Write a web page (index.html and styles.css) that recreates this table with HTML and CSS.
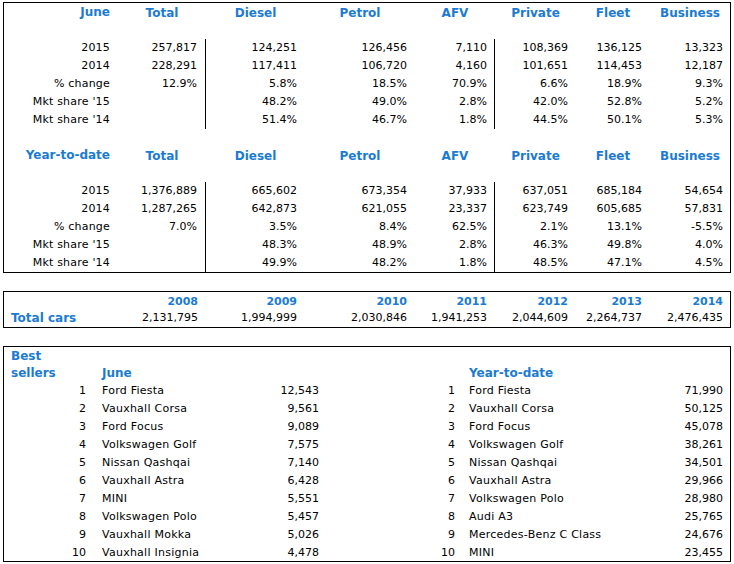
FILE: index.html
```html
<!DOCTYPE html>
<html lang="en">
<head>
<meta charset="utf-8">
<title>New car registrations</title>
<link rel="stylesheet" href="styles.css">
</head>
<body>
<section class="box sales">
  <div class="r hd"><span class="lab">June</span><span>Total</span><span>Diesel</span><span>Petrol</span><span>AFV</span><span>Private</span><span>Fleet</span><span>Business</span></div>
  <div class="r gap"></div>
  <div class="r"><span class="lab">2015</span><span class="sep">257,817</span><span>124,251</span><span>126,456</span><span class="sep s5">7,110</span><span>108,369</span><span>136,125</span><span>13,323</span></div>
  <div class="r"><span class="lab">2014</span><span class="sep">228,291</span><span>117,411</span><span>106,720</span><span class="sep s5">4,160</span><span>101,651</span><span>114,453</span><span>12,187</span></div>
  <div class="r"><span class="lab">% change</span><span class="sep">12.9%</span><span>5.8%</span><span>18.5%</span><span class="sep s5">70.9%</span><span>6.6%</span><span>18.9%</span><span>9.3%</span></div>
  <div class="r"><span class="lab">Mkt share '15</span><span class="sep"></span><span>48.2%</span><span>49.0%</span><span class="sep s5">2.8%</span><span>42.0%</span><span>52.8%</span><span>5.2%</span></div>
  <div class="r"><span class="lab">Mkt share '14</span><span class="sep"></span><span>51.4%</span><span>46.7%</span><span class="sep s5">1.8%</span><span>44.5%</span><span>50.1%</span><span>5.3%</span></div>
  <div class="r spacer"></div>
  <div class="r hd"><span class="lab">Year-to-date</span><span>Total</span><span>Diesel</span><span>Petrol</span><span>AFV</span><span>Private</span><span>Fleet</span><span>Business</span></div>
  <div class="r gap"></div>
  <div class="r"><span class="lab">2015</span><span class="sep">1,376,889</span><span>665,602</span><span>673,354</span><span class="sep s5">37,933</span><span>637,051</span><span>685,184</span><span>54,654</span></div>
  <div class="r"><span class="lab">2014</span><span class="sep">1,287,265</span><span>642,873</span><span>621,055</span><span class="sep s5">23,337</span><span>623,749</span><span>605,685</span><span>57,831</span></div>
  <div class="r"><span class="lab">% change</span><span class="sep">7.0%</span><span>3.5%</span><span>8.4%</span><span class="sep s5">62.5%</span><span>2.1%</span><span>13.1%</span><span>-5.5%</span></div>
  <div class="r"><span class="lab">Mkt share '15</span><span class="sep"></span><span>48.3%</span><span>48.9%</span><span class="sep s5">2.8%</span><span>46.3%</span><span>49.8%</span><span>4.0%</span></div>
  <div class="r"><span class="lab">Mkt share '14</span><span class="sep"></span><span>49.9%</span><span>48.2%</span><span class="sep s5">1.8%</span><span>48.5%</span><span>47.1%</span><span>4.5%</span></div>
</section>

<section class="box totals">
  <div class="r yr"><span></span><span>2008</span><span>2009</span><span>2010</span><span>2011</span><span>2012</span><span>2013</span><span>2014</span></div>
  <div class="r tc"><span class="title">Total cars</span><span>2,131,795</span><span>1,994,999</span><span>2,030,846</span><span>1,941,253</span><span>2,044,609</span><span>2,264,737</span><span>2,476,435</span></div>
</section>

<section class="box best">
  <div class="b top"><span class="title">Best</span></div>
  <div class="b hd2"><span class="title">sellers</span><span class="title nm">June</span><span></span><span></span><span class="title nm2">Year-to-date</span><span></span></div>
  <div class="b"><span>1</span><span class="nm">Ford Fiesta</span><span>12,543</span><span>1</span><span class="nm2">Ford Fiesta</span><span class="v">71,990</span></div>
  <div class="b"><span>2</span><span class="nm">Vauxhall Corsa</span><span>9,561</span><span>2</span><span class="nm2">Vauxhall Corsa</span><span class="v">50,125</span></div>
  <div class="b"><span>3</span><span class="nm">Ford Focus</span><span>9,089</span><span>3</span><span class="nm2">Ford Focus</span><span class="v">45,078</span></div>
  <div class="b"><span>4</span><span class="nm">Volkswagen Golf</span><span>7,575</span><span>4</span><span class="nm2">Volkswagen Golf</span><span class="v">38,261</span></div>
  <div class="b"><span>5</span><span class="nm">Nissan Qashqai</span><span>7,140</span><span>5</span><span class="nm2">Nissan Qashqai</span><span class="v">34,501</span></div>
  <div class="b"><span>6</span><span class="nm">Vauxhall Astra</span><span>6,428</span><span>6</span><span class="nm2">Vauxhall Astra</span><span class="v">29,966</span></div>
  <div class="b"><span>7</span><span class="nm">MINI</span><span>5,551</span><span>7</span><span class="nm2">Volkswagen Polo</span><span class="v">28,980</span></div>
  <div class="b"><span>8</span><span class="nm">Volkswagen Polo</span><span>5,457</span><span>8</span><span class="nm2">Audi A3</span><span class="v">25,765</span></div>
  <div class="b"><span>9</span><span class="nm">Vauxhall Mokka</span><span>5,026</span><span>9</span><span class="nm2">Mercedes-Benz C Class</span><span class="v">24,676</span></div>
  <div class="b"><span>10</span><span class="nm">Vauxhall Insignia</span><span>4,478</span><span>10</span><span class="nm2">MINI</span><span class="v">23,455</span></div>
</section>
</body>
</html>
```

FILE: styles.css
```css
html, body {
  margin: 0;
  background: #ffffff;
}
body {
  padding: 2px 0 0 3px;
  font-family: "DejaVu Sans", Verdana, sans-serif;
  font-size: 11px;
  color: #000000;
}
.box {
  box-sizing: border-box;
  width: 728px;
  border: 1px solid #000000;
  background: #ffffff;
}
.totals, .best {
  margin-top: 18px;
}
.r {
  display: grid;
  grid-template-columns: 114px 88px 99px 110px 80px 81px 74px 80px;
  height: 18px;
  line-height: 18px;
}
.r > span {
  box-sizing: border-box;
  text-align: right;
  padding-right: 8px;
  white-space: nowrap;
}
.r > span:last-child {
  padding-right: 7px;
}
.r .lab {
  letter-spacing: 0.2px;
}
.r .sep {
  border-right: 1px solid #000000;
}
.r .s5 {
  padding-right: 7px;
}
.r.spacer {
  height: 17px;
}
.hd > span {
  text-align: center;
  padding-right: 0;
  padding-top: 1px;
  font-weight: bold;
  font-size: 12px;
  color: #1b7bd3;
}
.hd > span:last-child {
  padding-right: 0;
}
.hd > span.lab {
  text-align: right;
  padding-right: 8px;
  padding-top: 0;
  letter-spacing: 0;
}
.yr {
  height: 17px;
  line-height: 17px;
}
.yr > span {
  font-weight: bold;
  color: #1b7bd3;
  padding-top: 1px;
}
.tc > span.title {
  text-align: left;
  padding-left: 7px;
  padding-right: 0;
  font-weight: bold;
  font-size: 12px;
  color: #1b7bd3;
}
.b {
  display: grid;
  grid-template-columns: 90px 156px 77px 136px 157px 110px;
  height: 18px;
  line-height: 18px;
}
.b > span {
  box-sizing: border-box;
  text-align: right;
  padding-right: 8px;
  padding-top: 1px;
  white-space: nowrap;
}
.b > span.nm {
  text-align: left;
  padding-left: 8px;
  padding-right: 0;
  letter-spacing: 0.25px;
}
.b > span.nm2 {
  text-align: left;
  padding-left: 6px;
  padding-right: 0;
  letter-spacing: 0.25px;
}
.b > span.v {
  padding-right: 7px;
}
.b.top {
  height: 16px;
  line-height: 16px;
}
.b > span.title {
  font-weight: bold;
  font-size: 12px;
  color: #1b7bd3;
  letter-spacing: 0;
}
.b > span.title:first-child {
  text-align: left;
  padding-left: 7px;
  padding-right: 0;
}
```
